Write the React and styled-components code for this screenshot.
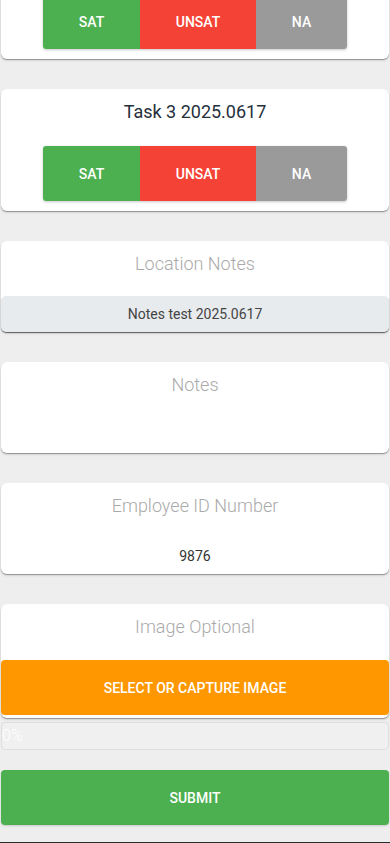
import React from "react";
import styled, { createGlobalStyle } from "styled-components";

const Global = createGlobalStyle`
  html, body { margin: 0; padding: 0; background: #eeeeee; }
  body { font-family: Roboto, "Liberation Sans", sans-serif; overflow: hidden; }
  * { box-sizing: border-box; }
`;

const Page = styled.div`
  width: 390px;
  height: 843px;
  overflow: hidden;
  background: #eeeeee;
  display: flex;
  flex-direction: column;
`;

const Scroll = styled.div`
  flex: 1;
  overflow: hidden;
  display: flex;
  flex-direction: column;
  gap: 30px;
  padding: 0 1px;
  margin-top: -63px;
`;

const Card = styled.section`
  background: #fff;
  border-radius: 6px;
  box-shadow: 0 1px 1px rgba(0, 0, 0, 0.35), 0 2px 3px rgba(0, 0, 0, 0.08);
  display: flex;
  flex-direction: column;
  align-items: stretch;
  padding: 12px 0 ${(p) => p.$pb || 0}px;
`;

const Title = styled.div`
  text-align: center;
  font-size: 18px;
  line-height: 22px;
  color: #26303c;
  font-weight: 400;
`;

const Label = styled.div`
  text-align: center;
  font-size: 18px;
  line-height: 22px;
  color: #aaaaaa;
  font-weight: 300;
`;

const Group = styled.div`
  align-self: center;
  margin-top: 23px;
  display: flex;
  border-radius: 3px;
  overflow: hidden;
  box-shadow: 0 1px 3px rgba(0, 0, 0, 0.22);
`;

const Choice = styled.button`
  height: 55px;
  width: ${(p) => p.$w}px;
  padding: 0;
  border: none;
  background: ${(p) => p.$bg};
  color: #fff;
  font-family: Roboto, "Liberation Sans", sans-serif;
  font-weight: 500;
  font-size: 14px;
`;

const Field = styled.div`
  margin-top: 21px;
  height: 36px;
  display: flex;
  align-items: center;
  justify-content: center;
  font-size: 14px;
  color: ${(p) => (p.$filled ? "#444" : "#333")};
  background: ${(p) => (p.$filled ? "#e8ebee" : "transparent")};
  border-radius: 5px;
  box-shadow: ${(p) => (p.$filled ? "0 1px 1px rgba(0,0,0,0.35)" : "none")};
  padding-bottom: 1px;
`;

const WideButton = styled.button`
  width: 100%;
  height: 55px;
  border: none;
  border-radius: 4px;
  background: ${(p) => p.$bg};
  color: #fff;
  font-family: Roboto, "Liberation Sans", sans-serif;
  font-weight: 500;
  font-size: 14px;
  margin-top: ${(p) => p.$mt || 0}px;
  box-shadow: ${(p) => p.$shadow || "none"};
`;

const Progress = styled.div`
  margin-top: -26px;
  height: 28px;
  background: #f0f0f0;
  border: 1px solid #dedede;
  border-radius: 4px;
  color: #fff;
  font-size: 16px;
  font-weight: 300;
  line-height: 26px;
`;

const Footer = styled.div`
  height: 1px;
  background: #2a2a2a;
`;

const tasks = ["Task 2 2025.0617", "Task 3 2025.0617"];
const choices = [
  { label: "SAT", bg: "#4caf50", w: 97 },
  { label: "UNSAT", bg: "#f44336", w: 116 },
  { label: "NA", bg: "#9a9a9a", w: 91 },
];

function TaskCard({ title }) {
  return (
    <Card $pb={10}>
      <Title>{title}</Title>
      <Group>
        {choices.map((c) => (
          <Choice key={c.label} $bg={c.bg} $w={c.w}>
            {c.label}
          </Choice>
        ))}
      </Group>
    </Card>
  );
}

export default function App() {
  return (
    <Page>
      <Global />
      <Scroll>
        {tasks.map((t) => (
          <TaskCard key={t} title={t} />
        ))}
        <Card>
          <Label>Location Notes</Label>
          <Field $filled>Notes test 2025.0617</Field>
        </Card>
        <Card>
          <Label>Notes</Label>
          <Field />
        </Card>
        <Card>
          <Label>Employee ID Number</Label>
          <Field>9876</Field>
        </Card>
        <Card $pb={3}>
          <Label>Image Optional</Label>
          <WideButton $bg="#ff9800" $mt={22}>SELECT OR CAPTURE IMAGE</WideButton>
        </Card>
        <Progress>0%</Progress>
        <WideButton $bg="#4caf50" $mt={-10} $shadow="0 1px 2px rgba(0,0,0,0.15)">
          SUBMIT
        </WideButton>
      </Scroll>
      <Footer />
    </Page>
  );
}
